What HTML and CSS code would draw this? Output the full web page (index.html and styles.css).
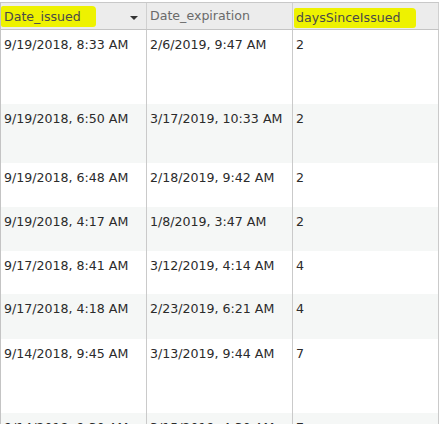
FILE: index.html
```html
<!DOCTYPE html>
<html>
<head>
<meta charset="utf-8">
<link rel="stylesheet" href="styles.css">
</head>
<body>
<div class="grid">
  <div class="row head">
    <div class="cell"><span class="mark mark1">Date_issued</span><span class="caret"></span></div>
    <div class="cell muted">Date_expiration</div>
    <div class="cell"><span class="mark mark3">daysSinceIssued</span></div>
  </div>
  <div class="row h74">
    <div class="cell">9/19/2018, 8:33 AM</div>
    <div class="cell">2/6/2019, 9:47 AM</div>
    <div class="cell">2</div>
  </div>
  <div class="row alt h59">
    <div class="cell">9/19/2018, 6:50 AM</div>
    <div class="cell">3/17/2019, 10:33 AM</div>
    <div class="cell">2</div>
  </div>
  <div class="row h44">
    <div class="cell">9/19/2018, 6:48 AM</div>
    <div class="cell">2/18/2019, 9:42 AM</div>
    <div class="cell">2</div>
  </div>
  <div class="row alt h44">
    <div class="cell">9/19/2018, 4:17 AM</div>
    <div class="cell">1/8/2019, 3:47 AM</div>
    <div class="cell">2</div>
  </div>
  <div class="row h43">
    <div class="cell">9/17/2018, 8:41 AM</div>
    <div class="cell">3/12/2019, 4:14 AM</div>
    <div class="cell">4</div>
  </div>
  <div class="row alt h45">
    <div class="cell">9/17/2018, 4:18 AM</div>
    <div class="cell">2/23/2019, 6:21 AM</div>
    <div class="cell">4</div>
  </div>
  <div class="row h74">
    <div class="cell">9/14/2018, 9:45 AM</div>
    <div class="cell">3/13/2019, 9:44 AM</div>
    <div class="cell">7</div>
  </div>
  <div class="row alt h44">
    <div class="cell">9/14/2018, 9:30 AM</div>
    <div class="cell">3/15/2019, 4:30 AM</div>
    <div class="cell">7</div>
  </div>
</div>
</body>
</html>
```

FILE: styles.css
```css
html, body {
  margin: 0;
  padding: 0;
  background: #ffffff;
  overflow: hidden;
}
body {
  font-family: "DejaVu Sans", Verdana, sans-serif;
  font-size: 12.6px;
  color: #2b2b2b;
  padding-top: 2px;
}
.grid {
  border-left: 1px solid #c4c4c4;
  border-top: 1px solid #c8c8c8;
  width: 438px;
}
.row {
  display: grid;
  grid-template-columns: 146px 146px 146px;
  box-sizing: border-box;
}
.cell {
  border-right: 1px solid #cacaca;
  padding: 7px 0 0 3px;
  white-space: nowrap;
  overflow: hidden;
  position: relative;
}
.head {
  background: #ececec;
  height: 27px;
  border-bottom: 1px solid #c4c4c4;
  color: #4a4a4a;
}
.head .cell {
  padding-top: 5px;
  border-right-color: #d0d0d0;
}
.muted { color: #6a6a6a; }
.mark {
  background: #eef200;
  display: inline-block;
  border-radius: 2px 4px 3px 2px;
}
.mark1 {
  margin-left: -3px;
  margin-top: -2px;
  padding: 3px 15px 3px 3px;
}
.mark3 {
  margin-left: -2px;
  margin-top: 0;
  padding: 2px 16px 3px 2px;
}
.caret {
  position: absolute;
  left: 129px;
  top: 13px;
  width: 0;
  height: 0;
  border-left: 4px solid transparent;
  border-right: 4px solid transparent;
  border-top: 4px solid #333;
}
.alt { background: #f5f7f6; }
.h74 { height: 74px; }
.h59 { height: 59px; }
.h45 { height: 45px; }
.h44 { height: 44px; }
.h43 { height: 43px; }
```
